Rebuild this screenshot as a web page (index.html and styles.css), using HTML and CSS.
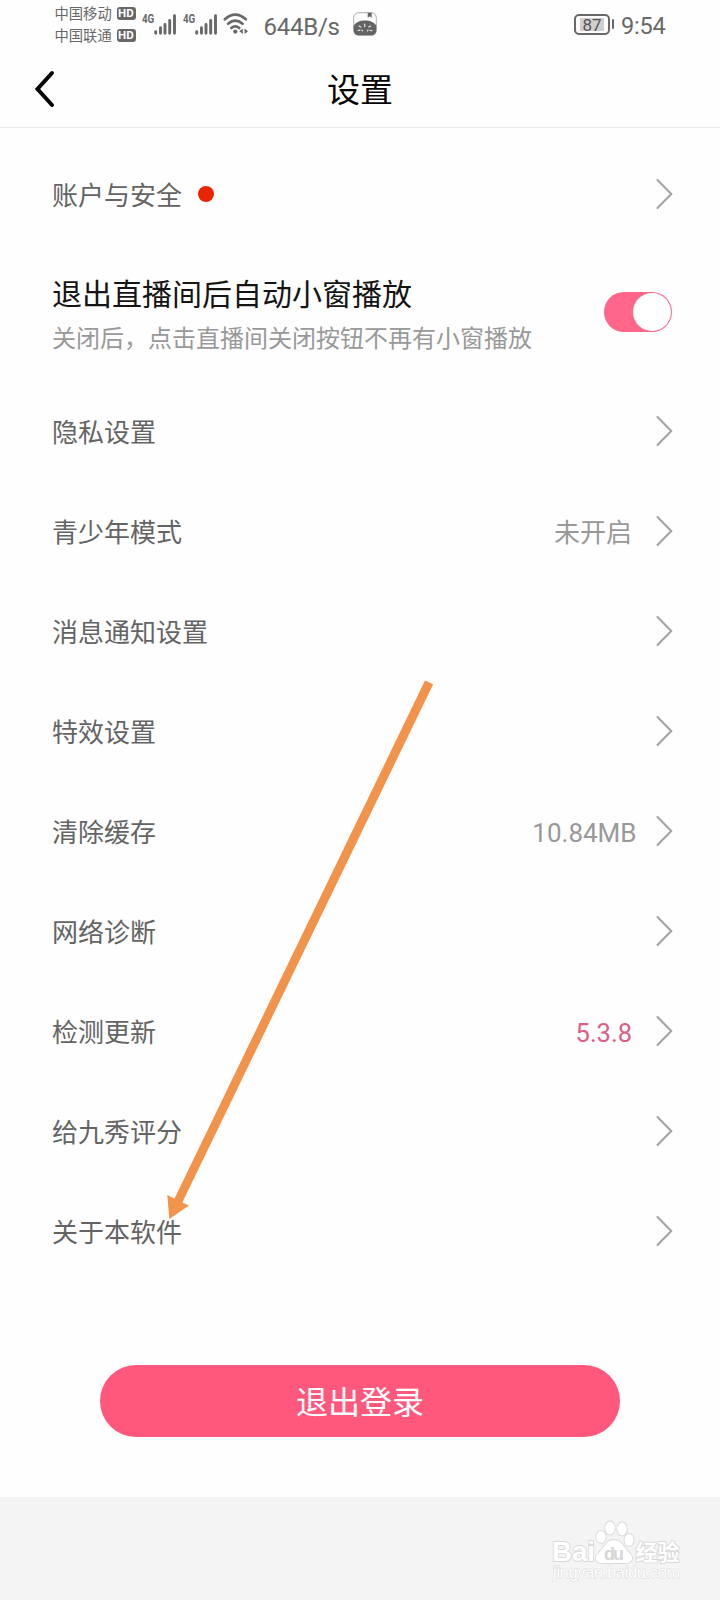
FILE: index.html
```
<!DOCTYPE html>
<html lang="zh-CN">
<head>
<meta charset="utf-8">
<title>设置</title>
<link rel="stylesheet" href="styles.css">
</head>
<body>
<svg class="defs" width="0" height="0" aria-hidden="true">
  <symbol id="chevron" viewBox="0 0 18 32"><path d="M2.500 2 16.300 16 2.500 30" fill="none" stroke="#a2a2a2" stroke-width="2" stroke-linecap="round"/></symbol>
  <symbol id="signal" viewBox="0 0 23 21"><path d="M1.700 19.300v-1.500M6.500 19.300v-5.500M11 19.300V10.500M15.700 19.300V6.500M20.500 19.300V1.800" fill="none" stroke="#686868" stroke-width="2.900" stroke-linecap="round"/></symbol>
</svg>
<main class="screen">
  <header class="status">
    <div class="carriers">
      <div class="carrier"><span>中国移动</span><b class="hd">HD</b></div>
      <div class="carrier"><span>中国联通</span><b class="hd">HD</b></div>
    </div>
    <div class="network first"><span class="gen">4G</span><svg class="bars"><use href="#signal"/></svg></div>
    <div class="network"><span class="gen">4G</span><svg class="bars"><use href="#signal"/></svg></div>
    <svg class="wifi" viewBox="0 0 26 22">
      <g fill="none" stroke="#686868" stroke-width="2.600" stroke-linecap="round"><path d="M1.800 6.300Q12.300-3 22.800 6.300"/><path d="M5 10.700Q12.300 4.500 19.600 10.700"/><path d="M8.300 15Q12.300 11.700 16.300 15"/></g>
      <circle cx="12.300" cy="18.600" r="2.100" fill="#686868"/><path d="M19.800 15.500v5.600l-3.500-2.800zM21.500 15.500v5.600l3.500-2.800z" fill="#686868"/>
    </svg>
    <span class="speed">644B/s</span>
    <svg class="app" viewBox="0 0 24 24">
      <rect x=".7" y=".7" width="22.600" height="22.600" rx="5" fill="#fff" stroke="#888" stroke-width=".7"/>
      <path d="M.7 14C3 6.500 21 6.500 23.300 14v4.300q0 5-5 5H5.700q-5 0-5-5z" fill="#646464"/>
      <path d="M14.700.8h4v5l-2-1.500-2 1.500z" fill="#646464"/>
      <path d="M6 14l1.800.9M11.700 12v2.500M17.500 14l-1.700 1M5 18.500l2-.4M9 18l.5 1M14.500 19l.5-1M17 18.300l2 .4" stroke="#eee" stroke-width="1.100" stroke-linecap="round"/>
    </svg>
    <div class="battery"><span class="charge">87</span></div><i class="nub"></i>
    <span class="time">9:54</span>
  </header>
  <nav class="titlebar">
    <svg class="back" viewBox="0 0 22 38"><path d="M19 3 4.500 19 19 35" fill="none" stroke="#050505" stroke-width="4" stroke-linecap="round"/></svg>
    <h1>设置</h1>
  </nav>
  <section class="list">
    <div class="row"><span>账户与安全</span><i class="dot"></i><svg class="chev"><use href="#chevron"/></svg></div>
    <div class="row window">
      <div class="copy"><h2>退出直播间后自动小窗播放</h2><p>关闭后，点击直播间关闭按钮不再有小窗播放</p></div>
      <div class="toggle"><i class="knob"></i></div>
    </div>
    <div class="row"><span>隐私设置</span><svg class="chev"><use href="#chevron"/></svg></div>
    <div class="row"><span>青少年模式</span><span class="value">未开启</span><svg class="chev"><use href="#chevron"/></svg></div>
    <div class="row"><span>消息通知设置</span><svg class="chev"><use href="#chevron"/></svg></div>
    <div class="row"><span>特效设置</span><svg class="chev"><use href="#chevron"/></svg></div>
    <div class="row"><span>清除缓存</span><span class="value size">10.84MB</span><svg class="chev"><use href="#chevron"/></svg></div>
    <div class="row"><span>网络诊断</span><svg class="chev"><use href="#chevron"/></svg></div>
    <div class="row"><span>检测更新</span><span class="value version">5.3.8</span><svg class="chev"><use href="#chevron"/></svg></div>
    <div class="row"><span>给九秀评分</span><svg class="chev"><use href="#chevron"/></svg></div>
    <div class="row"><span>关于本软件</span><svg class="chev"><use href="#chevron"/></svg></div>
  </section>
  <button class="logout">退出登录</button>
  <footer class="foot">
    <svg class="mark" viewBox="0 0 134 66">
      <g fill="#fff" stroke="#d9d9d9" stroke-width="1.800" paint-order="stroke">
        <text class="latin" x="2" y="43" font-size="28" textLength="43" lengthAdjust="spacingAndGlyphs">Bai</text>
        <path d="M64 22c6 0 8 4 11 8s8 7 7 11c-1 5-6 4-18 4s-17 1-18-4c-1-4 4-7 7-11s5-8 11-8z"/>
        <ellipse cx="51" cy="19" rx="4.800" ry="6"/><ellipse cx="60" cy="10" rx="4.800" ry="6.500"/><ellipse cx="72" cy="11" rx="4.800" ry="6.500"/><ellipse cx="79" cy="22" rx="4.600" ry="6"/>
        <text class="cjk" x="85.500" y="42" font-size="22" textLength="44">经验</text>
        <text class="url" x="3" y="60" font-size="16" textLength="127" stroke-width="1">jingyan.baidu.com</text>
      </g>
      <text class="latin" x="54" y="42" font-size="18" textLength="20" fill="#d6d6d6">du</text>
    </svg>
  </footer>
  <svg class="arrow" viewBox="0 0 270 544"><path d="M260 4.500 268.200 8.300 17.300 526.500 24 529.500 4.300 543 2.300 519 9.400 522.800z" fill="#f2934c"/></svg>
</main>
</body>
</html>
```
FILE: styles.css
```
* { box-sizing: border-box; }
body { margin: 0; background: #fefefe; font-family: "Noto Sans CJK SC", sans-serif; color: #646464; }
h1, h2, p { margin: 0; font-weight: 400; }
i { display: block; }
svg { display: block; flex: none; }
.defs { position: absolute; }
.screen { position: relative; width: 720px; height: 1600px; display: flex; flex-direction: column; overflow: hidden; }

.status { height: 50px; padding: 0 0 0 54.500px; display: flex; align-items: flex-start; color: #686868; }
.carriers { width: 81px; padding-top: 2px; }
.carrier { height: 22px; display: flex; align-items: center; justify-content: space-between; font-size: 14.300px; line-height: 22px; white-space: nowrap; }
.hd { width: 19px; height: 13px; border-radius: 3px; background: #686868; color: #fff; font: 700 11.500px/13px Roboto, sans-serif; text-align: center; letter-spacing: .3px; margin-top: 1px; }
.network { display: flex; width: 40.500px; padding-top: 14px; }
.network.first { margin-left: 6.500px; }
.gen { width: 12px; font: 700 13px/13px Roboto, sans-serif; transform: scaleX(.75); transform-origin: left; margin-top: -2px; }
.bars { width: 23px; height: 21px; }
.wifi { width: 26px; height: 22px; margin: 13px 0 0 -.5px; }
.speed { width: 80px; margin: 11px 0 0 15px; font: 400 24px/32px Roboto, sans-serif; letter-spacing: -.25px; }
.app { width: 24px; height: 24px; margin: 12px 0 0 9.500px; }
.battery { width: 36px; height: 21px; margin: 14px 0 0 197px; border: 2px solid #686868; border-radius: 5px; padding: 2px; }
.charge { display: block; width: 24px; margin: 0 2px; height: 13px; background: #cfcfcf; color: #555; font: 400 17px/14px Roboto, sans-serif; text-align: center; }
.nub { width: 2.500px; height: 10px; margin: 19px 0 0 1.500px; background: #686868; border-radius: 1px; }
.time { margin: 11px 0 0 7px; font: 400 23.500px/31px Roboto, sans-serif; letter-spacing: -.2px; }

.titlebar { height: 78px; display: flex; align-items: center; justify-content: center; border-bottom: 1px solid #e9e9e9; padding: 0 33px; }
.back { width: 22px; height: 38px; margin-right: auto; }
.titlebar h1 { color: #050505; font-size: 33px; line-height: 48px; font-weight: 400; margin: -2px auto 0 0; transform: translateX(-11px); }

.list { padding: 16px 47px 0 52px; }
.row { height: 100px; display: flex; align-items: center; font-size: 26px; line-height: 40px; }
.chev { width: 18px; height: 32px; margin-left: auto; }
.dot { width: 16px; height: 16px; margin-left: 16px; border-radius: 50%; background: #eb2504; }
.value { margin-left: auto; margin-right: 23px; color: #999; }
.value + .chev { margin-left: 0; }
.size { font-family: Roboto, sans-serif; margin-right: 18.500px; padding-top: 4px; }
.version { font-family: Roboto, sans-serif; font-size: 25.500px; color: #db5f84; padding-top: 4px; }
.row.window { height: 137px; justify-content: space-between; align-items: flex-start; }
.copy { padding-top: 26px; }
.copy h2 { color: #151515; font-size: 30px; line-height: 44px; }
.copy p { color: #999; font-size: 24px; line-height: 36px; margin-top: 5px; }
.toggle { width: 68px; height: 40px; margin: 48px 1px 0 0; padding: 1px; border-radius: 20px; background: #ff668a; display: flex; justify-content: flex-end; }
.knob { width: 38px; height: 38px; border-radius: 50%; background: #fff; }

.logout { width: 520px; height: 72px; margin: 84px auto 0; flex: none; padding: 0 0 2px; border: 0; border-radius: 36px; background: #ff587c; color: #fff; font: 400 32px/70px "Noto Sans CJK SC", sans-serif; }
.foot { height: 103px; margin-top: auto; background: #f4f4f4; display: flex; justify-content: flex-end; padding: 21px 36px 0 0; }
.mark { width: 134px; height: 66px; }
.latin { font-family: "Liberation Sans", sans-serif; font-weight: 700; }
.cjk { font-family: "Noto Sans CJK SC", sans-serif; font-weight: 700; }
.url { font-family: "Liberation Sans", sans-serif; }
.arrow { position: absolute; left: 165px; top: 676px; width: 270px; height: 544px; }
```
